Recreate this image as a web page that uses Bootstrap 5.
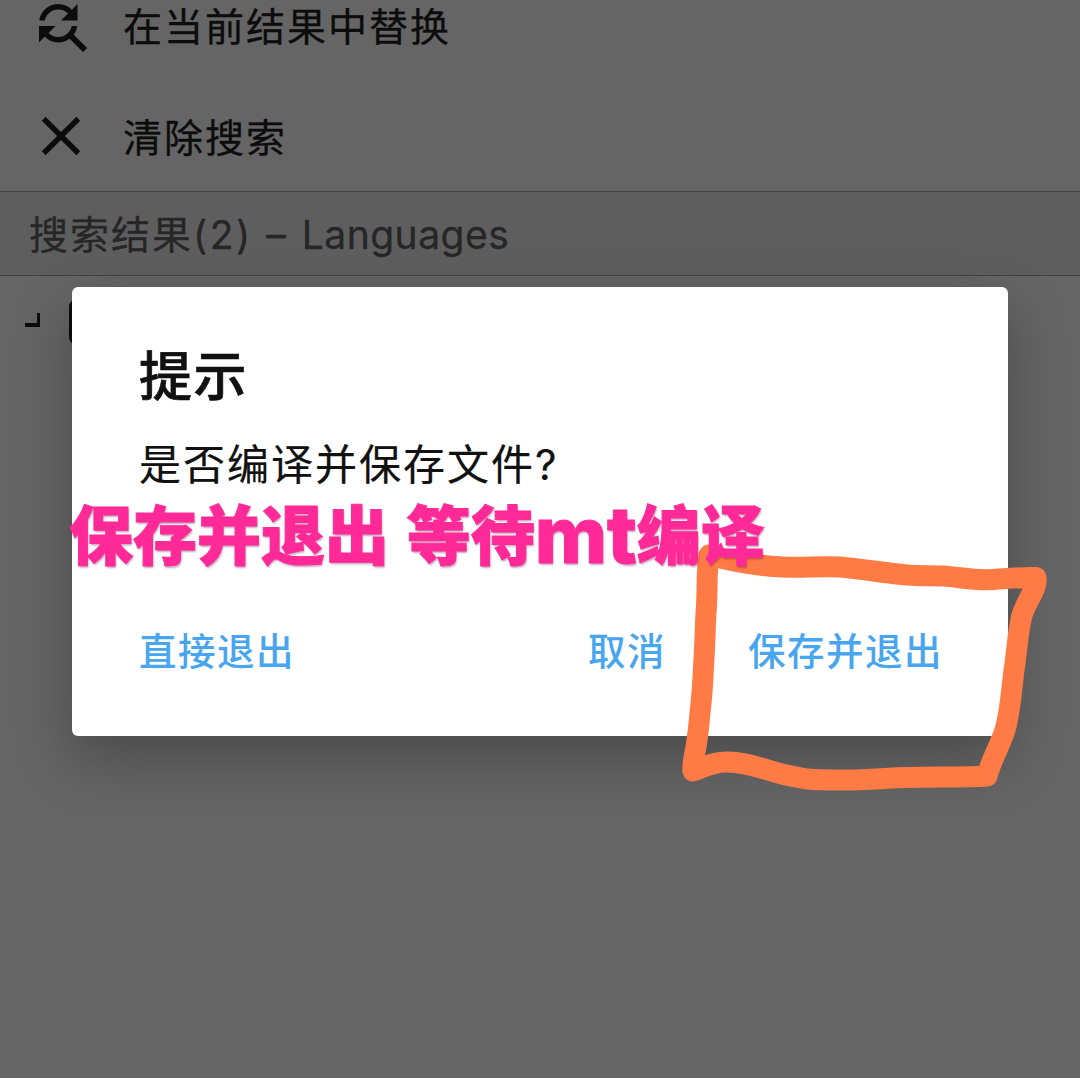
<!DOCTYPE html>
<html lang="zh-CN">
<head>
<meta charset="utf-8">
<meta name="viewport" content="width=device-width, initial-scale=1">
<title>提示</title>
<link href="https://cdn.jsdelivr.net/npm/bootstrap@5.3.0/dist/css/bootstrap.min.css" rel="stylesheet">
<style>
body{background:#656565;color:#0c0c0c;font-family:Inter,"Noto Sans CJK SC",sans-serif;height:1078px;overflow:hidden}
.stage{width:1080px;height:1078px}
.tool-row{height:110px;padding-left:28px;font:400 39px/50px "Noto Sans CJK SC",sans-serif;letter-spacing:2px}
.tool-row svg{width:66px;height:66px;margin-right:29px;flex:none}
.tool-row span{padding-bottom:3px;-webkit-text-stroke:.3px currentColor}
.tool-row.first{height:81px}
.tool-row.first svg{margin-top:-7px}
.tool-row.first span{line-height:48px}
.result-head{height:85px;background:#5e5e5e;border-top:1px solid #444;border-bottom:1px solid #444;color:#262626;font:400 39px/60px "Noto Sans CJK SC",sans-serif;letter-spacing:2px;padding-left:29px;-webkit-text-stroke:.3px currentColor}
.latin{font-family:Inter,sans-serif}
.result-head .count{letter-spacing:2.5px}
.result-head .lang{letter-spacing:.5px}
.dlg{left:72px;top:287px;width:936px;height:449px;border-radius:6px;padding:0 65px 0 67px;box-shadow:0 22px 56px rgba(0,0,0,.27);color:#111}
.dlg-title{font:500 53px/60px "Noto Sans CJK SC",sans-serif;letter-spacing:1.5px;margin-top:56px;-webkit-text-stroke:.7px currentColor}
.dlg-msg{font:400 42px/50px "Noto Sans CJK SC",sans-serif;letter-spacing:2px;margin-top:34px;-webkit-text-stroke:.2px currentColor}
.dlg-actions{margin-top:134px;gap:82px}
.dlg-actions .btn{padding:0;border:0;color:#48a5ef;font:500 37.5px/50px "Noto Sans CJK SC",sans-serif;letter-spacing:1.5px}
.note{left:69px;top:499px;font:900 64px/64px "Noto Sans CJK SC",sans-serif;color:#ff2a98;text-shadow:1px 2px 2px rgba(90,0,60,.35);white-space:nowrap;-webkit-text-stroke:1px currentColor;word-spacing:3px}
.note .latin{font-size:78px;line-height:40px;font-weight:800;vertical-align:-4px}
.tree-row{height:48px;margin-top:22px}
.tree-row .elbow{width:15px;height:14px;margin:15px 29px 0 25px;border-right:3px solid #0c0c0c;border-bottom:4px solid #0c0c0c}
.tree-row .thumb{width:48px;height:48px;border-radius:9px;background:#0c0c0c}
</style>
<script src="https://cdn.jsdelivr.net/npm/bootstrap@5.3.0/dist/js/bootstrap.bundle.min.js"></script>
</head>
<body>
<main class="stage position-relative overflow-hidden">
  <div class="tool-row first d-flex align-items-start">
    <svg viewBox="0 0 24 24" fill="currentColor"><path d="M11 6c1.38 0 2.63.56 3.54 1.46L12 10h6V4l-2.05 2.05C14.68 4.78 12.93 4 11 4c-3.53 0-6.43 2.61-6.92 6H6.1c.46-2.28 2.48-4 4.9-4zm5.64 9.14c.66-.9 1.12-1.97 1.28-3.14H15.9c-.46 2.28-2.48 4-4.9 4-1.38 0-2.63-.56-3.54-1.46L10 12H4v6l2.05-2.05C7.32 17.22 9.07 18 11 18c1.55 0 2.98-.51 4.14-1.36L20 21.49 21.49 20l-4.85-4.86z"/></svg>
    <span>在当前结果中替换</span>
  </div>
  <div class="tool-row d-flex align-items-center">
    <svg viewBox="0 0 24 24" fill="currentColor"><path d="M19 6.41 17.59 5 12 10.59 6.41 5 5 6.41 10.59 12 5 17.59 6.41 19 12 13.41 17.59 19 19 17.59 13.41 12z"/></svg>
    <span>清除搜索</span>
  </div>
  <div class="result-head d-flex align-items-center"><span>搜索结果<span class="latin count">(2) – </span><span class="latin lang">Languages</span></span></div>
  <div class="tree-row d-flex"><span class="elbow"></span><span class="thumb"></span></div>

  <section class="dlg position-absolute bg-white d-flex flex-column" role="dialog">
    <h1 class="dlg-title mb-0">提示</h1>
    <p class="dlg-msg mb-0">是否编译并保存文件<span class="latin">?</span></p>
    <div class="dlg-actions d-flex">
      <button class="btn me-auto">直接退出</button>
      <button class="btn">取消</button>
      <button class="btn">保存并退出</button>
    </div>
  </section>

  <svg class="position-absolute top-0 start-0" width="1080" height="1078" fill="none" stroke="#ff7b45" stroke-width="21" stroke-linejoin="round" stroke-linecap="round">
    <path d="M709 555C730 561 758 566 783 567C802 568 820 566 840 567C862 569 885 573 907 575C919 576 931 575.500 943 576C958 577 972 580 987 579.700C1003 579 1020 577 1036 577.500C1038 589 1026 600 1021.500 617C1018 633 1017 648 1015 663C1011 690 1011 710 1005 730C1000 746 992 758 987 776C972 777 958 777 943 777C926 777 910 777 893 778C875 779 858 780.500 840 780C829 780 818 780 807 779C795 777 784 775 773 771.500C758 767 742 762 727 762C710 762 700 769 693 771C692 765 694 757 696 747C698 735 699 724 700 713C702 696 703 680 703.700 663C705 646 705 630 706 613C708 590 706 570 709 557"/>
  </svg>
  <div class="note position-absolute">保存并退出 等待<span class="latin">mt</span>编译</div>
</main>
</body>
</html>
